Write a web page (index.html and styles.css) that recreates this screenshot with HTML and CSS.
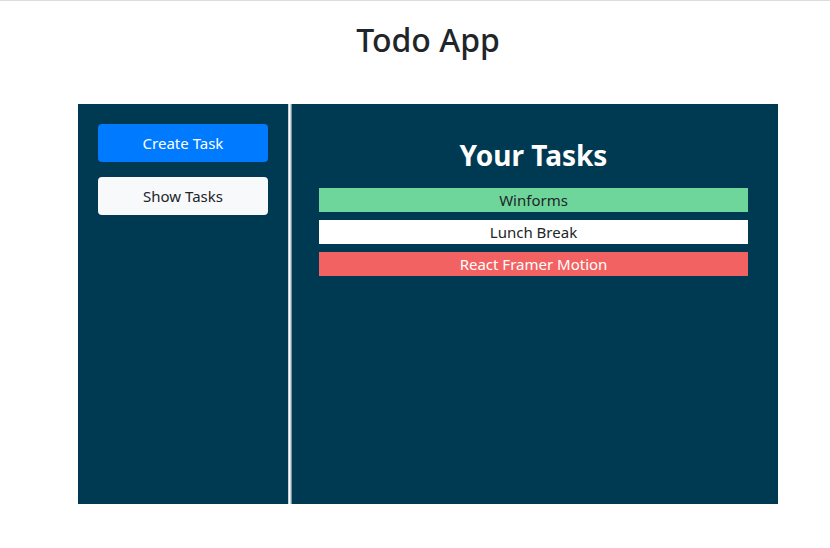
FILE: index.html
```html
<!DOCTYPE html>
<html>
<head>
<meta charset="utf-8">
<link rel="stylesheet" href="styles.css">
</head>
<body>
<div class="topline"></div>
<div class="page">
  <h1 class="app-title">Todo App</h1>
  <div class="app">
    <aside class="sidebar">
      <button class="btn btn-primary">Create Task</button>
      <button class="btn btn-light">Show Tasks</button>
    </aside>
    <div class="divider"></div>
    <main class="main">
      <h2 class="tasks-title">Your Tasks</h2>
      <div class="tasks">
        <div class="task task-green">Winforms</div>
        <div class="task task-white">Lunch Break</div>
        <div class="task task-red">React Framer Motion</div>
      </div>
    </main>
  </div>
</div>
</body>
</html>
```
FILE: styles.css
```css
* { box-sizing: border-box; }
html, body { margin: 0; padding: 0; background: #fff; }
body {
  font-family: "Noto Sans", "Open Sans", sans-serif;
  color: #212529;
}
.topline {
  height: 2px;
  border-top: 1px solid #dcdcdc;
}
.page {
  padding-left: 26px;
}
.app-title {
  margin: 17px 0 0;
  text-align: center;
  font-size: 32px;
  font-weight: 500;
  line-height: 42px;
}
.app {
  width: 700px;
  height: 400px;
  margin: 43px auto 0;
  background: #003a52;
  display: flex;
}
.sidebar {
  width: 210px;
  padding: 20px;
  display: flex;
  flex-direction: column;
  gap: 15px;
}
.btn {
  height: 38px;
  border: none;
  border-radius: 4px;
  font-family: inherit;
  font-size: 15px;
  width: 170px;
}
.btn-primary { background: #007bff; color: #fff; }
.btn-light { background: #f8f9fa; color: #212529; }
.divider {
  width: 4px;
  background: linear-gradient(90deg, #a9b9c2 0%, #ffffff 35%, #c9d3d8 65%, #4c6f80 100%);
}
.main {
  flex: 1;
  padding: 31px 30px 0 27px;
}
.tasks-title {
  margin: 0 0 13px;
  color: #fff;
  text-align: center;
  font-size: 28px;
  font-weight: 700;
  line-height: 40px;
}
.tasks {
  display: flex;
  flex-direction: column;
  gap: 8px;
}
.task {
  height: 24px;
  line-height: 24px;
  text-align: center;
  font-size: 15px;
}
.task-green { background: #6fd69b; color: #212529; }
.task-white { background: #fff; color: #212529; }
.task-red { background: #f26262; color: #fff; }
```
